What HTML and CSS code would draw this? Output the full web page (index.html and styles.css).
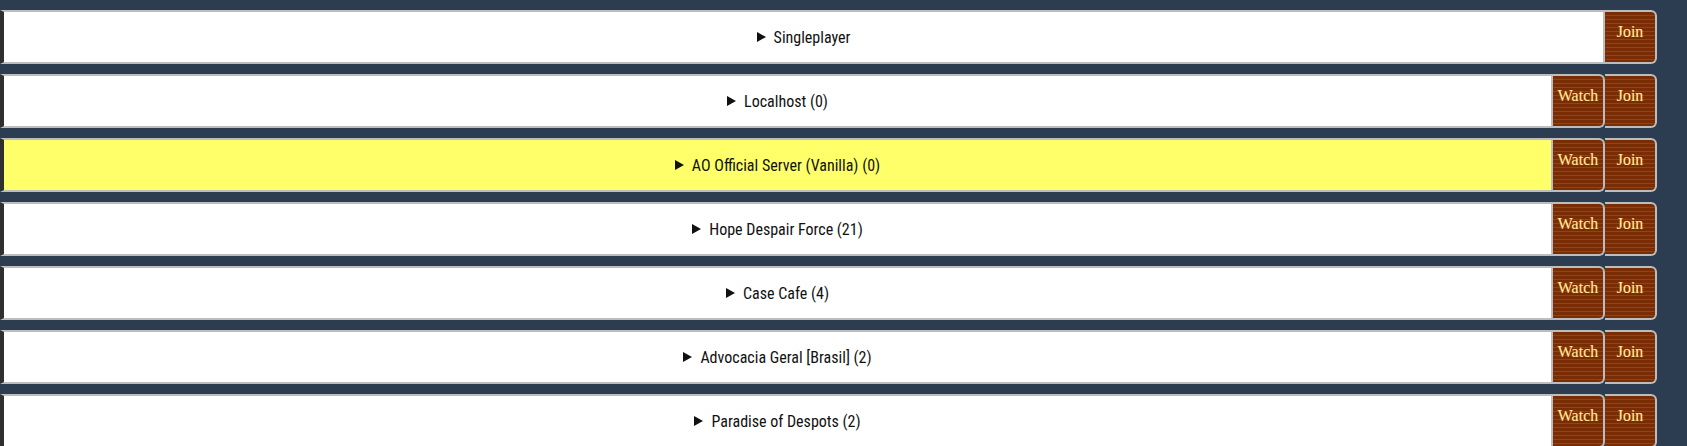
FILE: index.html
```html
<!DOCTYPE html>
<html>
<head>
<meta charset="utf-8">
<link rel="stylesheet" href="styles.css">
</head>
<body>
<ul class="servers">
  <li class="server">
    <details class="info"><summary class="name">Singleplayer</summary></details>
    <button class="btn">Join</button>
  </li>
  <li class="server">
    <details class="info"><summary class="name">Localhost (0)</summary></details>
    <button class="btn">Watch</button>
    <button class="btn">Join</button>
  </li>
  <li class="server selected">
    <details class="info"><summary class="name">AO Official Server (Vanilla) (0)</summary></details>
    <button class="btn">Watch</button>
    <button class="btn">Join</button>
  </li>
  <li class="server">
    <details class="info"><summary class="name">Hope Despair Force (21)</summary></details>
    <button class="btn">Watch</button>
    <button class="btn">Join</button>
  </li>
  <li class="server">
    <details class="info"><summary class="name">Case Cafe (4)</summary></details>
    <button class="btn">Watch</button>
    <button class="btn">Join</button>
  </li>
  <li class="server">
    <details class="info"><summary class="name">Advocacia Geral [Brasil] (2)</summary></details>
    <button class="btn">Watch</button>
    <button class="btn">Join</button>
  </li>
  <li class="server">
    <details class="info"><summary class="name">Paradise of Despots (2)</summary></details>
    <button class="btn">Watch</button>
    <button class="btn">Join</button>
  </li>
</ul>
</body>
</html>
```

FILE: styles.css
```css
html, body {
  margin: 0;
  padding: 0;
  background: #2c3d52;
  height: 100%;
  overflow: hidden;
}

.servers {
  list-style: none;
  margin: 0;
  padding: 10px 30px 0 0;
  display: flex;
  flex-direction: column;
  gap: 10px;
}

.server {
  display: flex;
  height: 54px;
}

.info {
  flex: 1;
  background: #ffffff;
  border-top: 2px solid #bdbdbd;
  border-bottom: 2px solid #bdbdbd;
  border-left: 4px solid #2f2f2f;
  border-right: 2px solid #bdbdbd;
  display: flex;
  align-items: center;
  justify-content: center;
}

.selected .info {
  background: #ffff6a;
}

.name {
  list-style: none;
  display: flex;
  align-items: center;
  gap: 8px;
  font-family: "Roboto Condensed", "Liberation Sans Narrow", "DejaVu Sans Condensed", sans-serif;
  font-size: 16px;
  color: #111;
  cursor: pointer;
}

.name::-webkit-details-marker {
  display: none;
}

.name::before {
  content: "";
  width: 0;
  height: 0;
  border-top: 5px solid transparent;
  border-bottom: 5px solid transparent;
  border-left: 9px solid #111;
}

.btn {
  width: 52px;
  height: 54px;
  margin: 0;
  padding: 11px 0 0 0;
  display: flex;
  justify-content: center;
  align-items: flex-start;
  border: 2px solid #bdbdbd;
  border-left: none;
  border-radius: 0 6px 6px 0;
  background: repeating-linear-gradient(to bottom, #7a2c04 0, #7a2c04 3px, #95421a 3px, #95421a 4px);
  font-family: "Liberation Serif", serif;
  font-size: 16px;
  font-weight: normal;
  color: #fff29a;
  text-shadow: -1px 0 rgba(220, 70, 30, 0.55);
  cursor: pointer;
}
```
